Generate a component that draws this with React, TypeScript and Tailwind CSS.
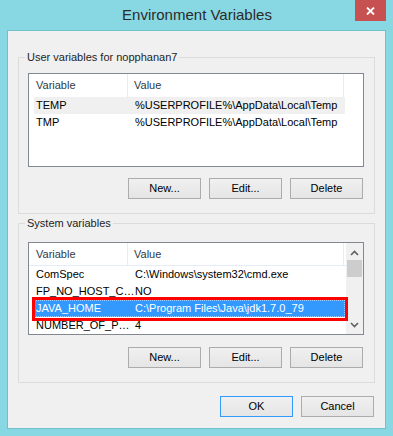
import React from "react";

const font = { fontFamily: '"Liberation Sans", Arial, sans-serif' };

function Btn({ label, primary }: { label: string; primary?: boolean }) {
  return (
    <div
      className={`w-[73px] h-[21px] flex items-center justify-center text-[11px] text-black border bg-gradient-to-b from-[#f0f0f0] to-[#e5e5e5] ${
        primary ? "border-[#3399ff]" : "border-[#acacac]"
      }`}
    >
      {label}
    </div>
  );
}

function Group({
  label,
  className,
  children,
}: {
  label: string;
  className: string;
  children: React.ReactNode;
}) {
  return (
    <div className={`relative border border-[#dcdcdc] ml-[10px] w-[357px] ${className}`}>
      <div className="absolute left-[6px] top-[-9px] px-[2px] bg-[#f0f0f0] text-[11px] leading-[16px] text-[#1e1e1e]">
        {label}
      </div>
      {children}
    </div>
  );
}

function Header({ full }: { full?: boolean }) {
  return (
    <div className={`flex shrink-0 h-[23px] text-[11px] text-[#2e3a48] ${full ? "" : "border-b border-[#e3ecf8]"}`}>
      <div className="w-[99px] shrink-0 pl-[7px] flex items-center border-r border-[#e3ecf8]">Variable</div>
      <div className="w-[216px] shrink-0 pl-[6px] flex items-center border-r border-[#e3ecf8]">Value</div>
    </div>
  );
}

function Row({
  name,
  value,
  bg,
}: {
  name: string;
  value: string;
  bg?: string;
}) {
  return (
    <div
      className={`ml-[5px] w-[311px] h-[17px] shrink-0 flex items-center text-[11px] text-black whitespace-nowrap ${bg ?? ""}`}
    >
      <div className="w-[101px] shrink-0 pl-[2px]">{name}</div>
      <div className="shrink-0">{value}</div>
    </div>
  );
}

function Chevron({ up }: { up?: boolean }) {
  return (
    <svg width="9" height="6" viewBox="0 0 9 6">
      <path
        d={up ? "M1 5 L4.5 1.5 L8 5" : "M1 1 L4.5 4.5 L8 1"}
        fill="none"
        stroke="#606060"
        strokeWidth="1.6"
      />
    </svg>
  );
}

export default function App() {
  return (
    <div className="w-[393px] h-[436px] bg-[#87d8e2] flex flex-col" style={font}>
      <div className="relative h-[30px] flex items-center justify-center">
        <div className="text-[15px] text-[#2b2b2b] mt-[1px] ml-[1px]">Environment Variables</div>
        <div className="absolute left-[355px] top-0 w-[31px] h-[21px] bg-[#c75050] flex items-center justify-center">
          <svg width="9" height="8" viewBox="0 0 9 8">
            <path d="M1 0.5 L8 7.5 M8 0.5 L1 7.5" stroke="#ffffff" strokeWidth="1.8" />
          </svg>
        </div>
      </div>

      <div className="ml-[7px] w-[379px] h-[399px] border border-[#72c0ca] bg-[#f0f0f0] flex flex-col">
        <Group label="User variables for nopphanan7" className="mt-[26px] h-[157px]">
          <div className="ml-[9px] mt-[15px] w-[336px] h-[94px] border border-[#828790] bg-white flex flex-col">
            <Header full />
            <Row name="TEMP" value="%USERPROFILE%\AppData\Local\Temp" bg="bg-[#f0f0f0]" />
            <Row name="TMP" value="%USERPROFILE%\AppData\Local\Temp" />
          </div>
          <div className="flex gap-[8px] ml-[109px] mt-[11px]">
            <Btn label="New..." />
            <Btn label="Edit..." />
            <Btn label="Delete" />
          </div>
        </Group>

        <Group label="System variables" className="mt-[9px] h-[160px]">
          <div className="relative ml-[9px] mt-[18px] w-[336px] h-[93px] border border-[#828790] bg-white flex">
            <div className="w-[317px] flex flex-col overflow-hidden">
              <Header />
              <Row name="ComSpec" value="C:\Windows\system32\cmd.exe" />
              <Row name="FP_NO_HOST_C…" value="NO" />
              <div className="ml-[5px] w-[311px] h-[17px] shrink-0 flex items-center text-[11px] whitespace-nowrap bg-[#3399ff] text-white border border-dotted border-[#9fcfff]">
                <div className="w-[101px] shrink-0 pl-[1px]">JAVA_HOME</div>
                <div className="-ml-[1px] shrink-0">C:\Program Files\Java\jdk1.7.0_79</div>
              </div>
              <Row name="NUMBER_OF_P…" value="4" />
            </div>
            <div className="w-[17px] bg-[#f0f0f0] flex flex-col items-center">
              <div className="mt-[7px] h-[6px] flex items-center">
                <Chevron up />
              </div>
              <div className="mt-[4px] w-[15px] h-[17px] bg-[#cdcdcd]" />
              <div className="mt-[45px] h-[6px] flex items-center">
                <Chevron />
              </div>
            </div>
            <div className="absolute left-[3px] top-[54px] w-[316px] h-[24px] border-[3px] border-[#ff0000]" />
          </div>
          <div className="flex gap-[8px] ml-[109px] mt-[12px]">
            <Btn label="New..." />
            <Btn label="Edit..." />
            <Btn label="Delete" />
          </div>
        </Group>

        <div className="flex gap-[8px] ml-[212px] mt-[13px]">
          <Btn label="OK" primary />
          <Btn label="Cancel" />
        </div>
      </div>
    </div>
  );
}
